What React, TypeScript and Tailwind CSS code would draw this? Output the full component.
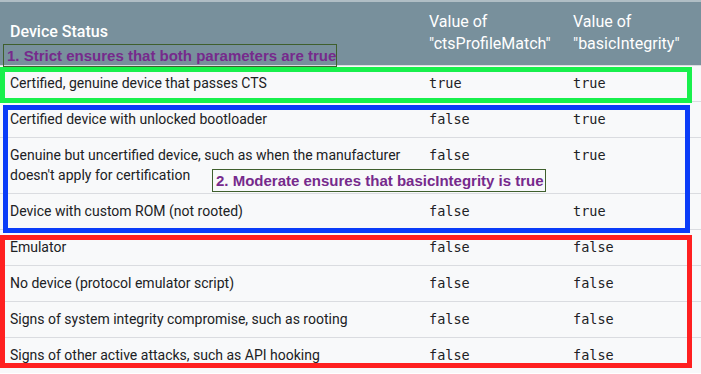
import React from "react";

type Row = { status: React.ReactNode; cts: string; basic: string };

const rows: Row[] = [
  { status: "Certified, genuine device that passes CTS", cts: "true", basic: "true" },
  { status: "Certified device with unlocked bootloader", cts: "false", basic: "true" },
  {
    status: (
      <>
        Genuine but uncertified device, such as when the manufacturer
        <br />
        doesn't apply for certification
      </>
    ),
    cts: "false",
    basic: "true",
  },
  { status: "Device with custom ROM (not rooted)", cts: "false", basic: "true" },
  { status: "Emulator", cts: "false", basic: "false" },
  { status: "No device (protocol emulator script)", cts: "false", basic: "false" },
  { status: "Signs of system integrity compromise, such as rooting", cts: "false", basic: "false" },
  { status: "Signs of other active attacks, such as API hooking", cts: "false", basic: "false" },
];

const mono = { fontFamily: '"DejaVu Sans Mono", "Liberation Mono", monospace' };

export default function App() {
  return (
    <div
      className="relative w-[701px] h-[374px] overflow-hidden bg-white"
      style={{ fontFamily: 'Roboto, "Liberation Sans", sans-serif' }}
    >
      {/* Header */}
      <div className="grid grid-cols-[419px_144px_1fr] h-[65px] bg-[#78909c] border-t-2 border-[#b0bec5] text-white text-[16px] leading-[22px]">
        <div className="pl-[10px] pt-[19px] font-medium">Device Status</div>
        <div className="pl-[10px] pt-[9px]">
          Value of
          <br />
          "ctsProfileMatch"
        </div>
        <div className="pl-[10px] pt-[9px]">
          Value of
          <br />
          "basicIntegrity"
        </div>
      </div>

      {/* Rows */}
      {rows.map((r, i) => (
        <div
          key={i}
          className="grid grid-cols-[419px_144px_1fr] bg-[#f8f9fa] border-t border-[#dadce0] text-[14px] leading-5 text-[#202124]"
        >
          <div className="pl-[10px] pt-[7px] pb-[8px]">{r.status}</div>
          <div className="pl-[10px] pt-[7px] pb-[8px] text-[13.5px]" style={mono}>
            {r.cts}
          </div>
          <div className="pl-[10px] pt-[7px] pb-[8px] text-[13.5px]" style={mono}>
            {r.basic}
          </div>
        </div>
      ))}

      {/* Annotation boxes */}
      <div className="absolute left-0 top-[67px] w-[692px] h-[36px] border-[5px] border-[#18f04c]" />
      <div className="absolute left-[3px] top-[105px] w-[687px] h-[128px] border-[5px] border-[#0a3cf8]" />
      <div className="absolute left-0 top-[235px] w-[692px] h-[133px] border-[5px] border-[#ff2020]" />

      {/* Annotation labels */}
      <div
        className="absolute left-[3px] top-[44px] w-[334px] h-[23px] border border-[#3f5f2d] pl-[3px] text-[15px] leading-[21px] font-bold text-[#762a8c] whitespace-nowrap"
        style={{ fontFamily: '"Liberation Sans", Arial, sans-serif' }}
      >
        1. Strict ensures that both parameters are true
      </div>
      <div
        className="absolute left-[212px] top-[169px] w-[334px] h-[23px] border border-[#3f5f2d] bg-[#f8f9fa] pl-[3px] text-[15px] leading-[21px] font-bold text-[#762a8c] whitespace-nowrap"
        style={{ fontFamily: '"Liberation Sans", Arial, sans-serif' }}
      >
        2. Moderate ensures that basicIntegrity is true
      </div>
    </div>
  );
}
